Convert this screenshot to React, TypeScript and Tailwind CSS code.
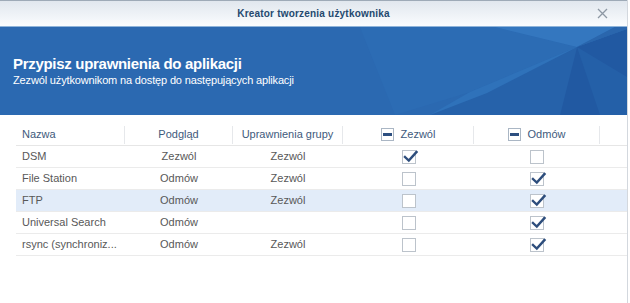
import React from 'react';

type Perm = 'allow' | 'deny';

const ROWS: { name: string; preview: string; group: string; perm: Perm }[] = [
  { name: 'DSM', preview: 'Zezwól', group: 'Zezwól', perm: 'allow' },
  { name: 'File Station', preview: 'Odmów', group: 'Zezwól', perm: 'deny' },
  { name: 'FTP', preview: 'Odmów', group: 'Zezwól', perm: 'deny' },
  { name: 'Universal Search', preview: 'Odmów', group: '', perm: 'deny' },
  { name: 'rsync (synchroniz...', preview: 'Odmów', group: 'Zezwól', perm: 'deny' },
];

const COLS = 'grid grid-cols-[109px_108px_110px_131px_126px_12px]';

const CheckBox: React.FC<{ checked: boolean }> = ({ checked }) => (
  <div className="relative w-[14px] h-[14px] border border-[#bcc3cb] bg-white">
    {checked && (
      <svg className="absolute -left-[1px] -top-[3px]" width="17" height="17" viewBox="0 0 17 17">
        <path d="M3 9 L6.8 12.6 L14.5 4" fill="none" stroke="#2d4d7c" strokeWidth="2.4" strokeLinecap="square" />
      </svg>
    )}
  </div>
);

const MinusBox: React.FC = () => (
  <div className="w-[13px] h-[13px] border border-[#aab6c4] bg-white flex items-center justify-center">
    <div className="w-[9px] h-[3px] bg-[#2d4f80]" />
  </div>
);

const HeaderCell: React.FC<{ children?: React.ReactNode; left?: boolean; last?: boolean }> = ({ children, left, last }) => (
  <div className="h-[23px] flex items-center pt-[2px]">
    <div
      className={`h-[18px] w-full flex items-center gap-[7px] ${last ? '' : 'border-r border-[#e6e8eb]'} ${
        left ? 'pl-[6px]' : 'justify-center'
      }`}
    >
      {children}
    </div>
  </div>
);

export default function App() {
  return (
    <div className="w-[630px] h-[303px] bg-white overflow-hidden font-['Liberation_Sans',Arial,sans-serif]">
      <div className="w-[628px] h-full border-r border-[#d3d8de]">
        {/* title bar */}
        <div className="relative h-[27px] border-t border-[#9eaab7] border-b border-b-[#8fb4da] bg-gradient-to-b from-[#e1e7ee] to-[#fafcfe] flex items-center justify-center">
          <span className="text-[10px] font-bold text-[#24496f] tracking-[0.2px]">Kreator tworzenia użytkownika</span>
          <svg className="absolute right-[19px] top-[7px]" width="11" height="11" viewBox="0 0 11 11">
            <path d="M1 1 L10 10 M10 1 L1 10" stroke="#8d98a4" strokeWidth="1.3" />
          </svg>
        </div>

        {/* banner */}
        <div className="relative h-[88px] bg-[#2b69b1] overflow-hidden">
          <svg className="absolute inset-0" width="627" height="88" viewBox="0 0 627 88">
            <polygon points="360,0 495,0 577,20 470,65 395,88" fill="#2c6cb4" />
            <polygon points="495,0 615,0 577,20" fill="#3477bf" />
            <polygon points="470,65 577,20 540,88 430,88" fill="#2f72ba" />
            <polygon points="430,88 487,66 577,20 560,88" fill="#2662aa" />
            <polygon points="577,20 627,2 627,88 560,88" fill="#2159a2" />
            <polygon points="577,20 627,50 627,88 600,88" fill="#2460a8" />
            <polygon points="615,0 627,0 627,2 577,20" fill="#2a66ad" />
          </svg>
          <div className="relative pl-[13px] pt-[28px] text-white">
            <div className="text-[15px] font-bold leading-[18px] tracking-[-0.3px]">Przypisz uprawnienia do aplikacji</div>
            <div className="text-[11px] leading-[14px] tracking-[-0.15px]">Zezwól użytkownikom na dostęp do następujących aplikacji</div>
          </div>
        </div>

        {/* table */}
        <div className="pl-[16px] pt-[7px] text-[11px]">
          <div className={`${COLS} border-b border-[#e6e6e6] text-[#415a7c]`}>
            <HeaderCell left>Nazwa</HeaderCell>
            <HeaderCell>Podgląd</HeaderCell>
            <HeaderCell>Uprawnienia grupy</HeaderCell>
            <HeaderCell>
              <MinusBox />
              <span>Zezwól</span>
            </HeaderCell>
            <HeaderCell>
              <MinusBox />
              <span>Odmów</span>
            </HeaderCell>
            <div />
          </div>

          {ROWS.map((r) => (
            <div
              key={r.name}
              className={`${COLS} h-[22px] border-b border-[#ebebeb] text-[#585858] ${
                r.name === 'FTP' ? 'bg-[#e2ecf9]' : ''
              }`}
            >
              <div className="flex items-center pl-[6px]">{r.name}</div>
              <div className="flex items-center justify-center">{r.preview}</div>
              <div className="flex items-center justify-center">{r.group}</div>
              <div className="flex items-center justify-center">
                <CheckBox checked={r.perm === 'allow'} />
              </div>
              <div className="flex items-center justify-center">
                <CheckBox checked={r.perm === 'deny'} />
              </div>
              <div />
            </div>
          ))}
        </div>
      </div>
    </div>
  );
}
